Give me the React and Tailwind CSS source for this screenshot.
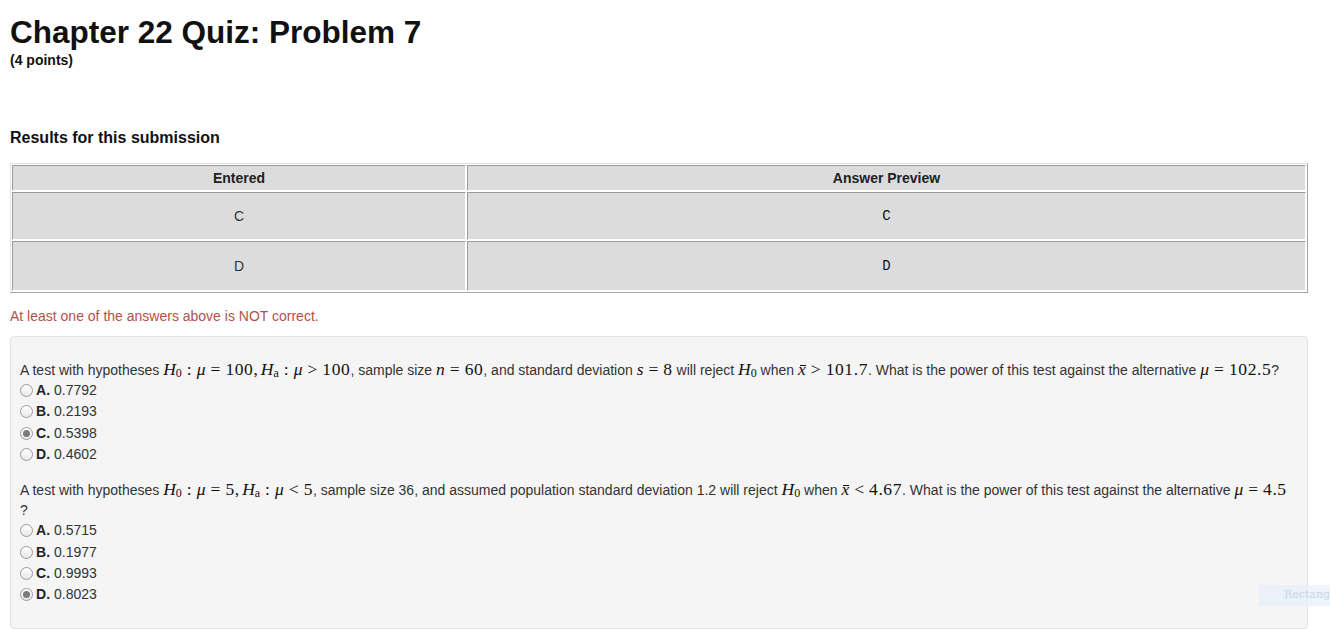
import React from 'react';

const Mi = ({ children }) => <span className="italic">{children}</span>;
const Mn = ({ children }) => <span className="tracking-[0.6px]">{children}</span>;
const Mo = ({ children }) => <span className="mx-[5px]">{children}</span>;
const H = ({ sub }) => (
    <span className="italic">
        H<sub className="not-italic text-[12px] leading-none relative top-[2px] align-baseline">{sub}</sub>
    </span>
);
const XBar = () => (
    <span className="relative inline-block italic leading-none">
        x
        <span className="absolute left-[2px] right-[0px] top-[4px] h-px bg-[#111]" />
    </span>
);

// inline math, roughly the MathJax look
const Math = ({ children }) => (
    <span className="font-['Liberation_Serif','Times_New_Roman',serif] text-[17.5px] leading-none text-[#111] whitespace-nowrap">{children}</span>
);

function Radio({ checked }) {
    return (
        <span className="inline-flex items-center justify-center w-[13px] h-[13px] rounded-full border border-[#9a9a9a] bg-gradient-to-b from-white to-[#e8e8e8] mr-[3px]">
            {checked && <span className="w-[7px] h-[7px] rounded-full bg-[#7b7b7b]" />}
        </span>
    );
}

function Option({ letter, value, checked }) {
    return (
        <div className="leading-[21px] h-[21.33px] flex items-center">
            <Radio checked={checked} />
            <b className="text-[#222]">{letter}.</b>
            <span className="ml-[4px]">{value}</span>
        </div>
    );
}

const cell = "bg-[#dcdcdc] border border-t-[#9c9c9c] border-l-[#9c9c9c] border-b-white border-r-white p-0 text-center align-middle";

export default function App() {
    return (
        <div className="relative w-[1330px] h-[638px] overflow-hidden bg-white font-['Liberation_Sans',Arial,sans-serif] text-[14px] text-[#333]">
            <div className="pl-[10px] w-[1308px]">
                <h1 className="mt-[14px] text-[31.5px] leading-[36px] font-bold text-[#111]">Chapter 22 Quiz: Problem 7</h1>
                <div className="mt-[2px] text-[14px] leading-[16px] font-bold text-[#111]">(4 points)</div>

                <h2 className="mt-[61px] text-[16px] leading-[18px] font-bold text-[#111]">Results for this submission</h2>

                <table className="mt-[16px] w-[1298px] border-separate border-spacing-[1px] border border-t-[#e2e2e2] border-l-[#e2e2e2] border-b-[#a5a5a5] border-r-[#a5a5a5]">
                    <thead>
                        <tr>
                            <th className={`${cell} w-[454px] h-[26px] font-bold text-[#222] leading-[22px]`}>Entered</th>
                            <th className={`${cell} h-[26px] font-bold text-[#222] leading-[22px]`}>Answer Preview</th>
                        </tr>
                    </thead>
                    <tbody>
                        <tr>
                            <td className={`${cell} h-[48px]`}>C</td>
                            <td className={`${cell} h-[48px] font-['Liberation_Mono','Courier_New',monospace] text-[#111]`}>C</td>
                        </tr>
                        <tr>
                            <td className={`${cell} h-[50px]`}>D</td>
                            <td className={`${cell} h-[50px] font-['Liberation_Mono','Courier_New',monospace] text-[#111]`}>D</td>
                        </tr>
                    </tbody>
                </table>

                <div className="mt-[13px] leading-[20px] text-[#b5504d]">At least one of the answers above is NOT correct.</div>

                <div className="mt-[10px] w-[1298px] bg-[#f5f5f5] border border-[#e3e3e3] rounded-[4px] pt-[23px] pb-[22px] px-[9px]">
                    <div className="leading-[20px] h-[20px]">
                        A test with hypotheses{' '}
                        <Math>
                            <H sub="0" /><Mo>:</Mo><Mi>μ</Mi><Mo>=</Mo><Mn>100</Mn>,<span className="ml-[3px]" />
                            <H sub="a" /><Mo>:</Mo><Mi>μ</Mi><Mo>&gt;</Mo><Mn>100</Mn>
                        </Math>
                        , sample size <Math><Mi>n</Mi><Mo>=</Mo><Mn>60</Mn></Math>, and standard deviation{' '}
                        <Math><Mi>s</Mi><Mo>=</Mo><Mn>8</Mn></Math> will reject <Math><H sub="0" /></Math> when{' '}
                        <Math><XBar /><Mo>&gt;</Mo><Mn>101.7</Mn></Math>. What is the power of this test against the alternative{' '}
                        <Math><Mi>μ</Mi><Mo>=</Mo><Mn>102.5</Mn></Math>?
                    </div>
                    <Option letter="A" value="0.7792" />
                    <Option letter="B" value="0.2193" />
                    <Option letter="C" value="0.5398" checked />
                    <Option letter="D" value="0.4602" />

                    <div className="mt-[15px] leading-[20px] h-[40px]">
                        A test with hypotheses{' '}
                        <Math>
                            <H sub="0" /><Mo>:</Mo><Mi>μ</Mi><Mo>=</Mo><Mn>5</Mn>,<span className="ml-[3px]" />
                            <H sub="a" /><Mo>:</Mo><Mi>μ</Mi><Mo>&lt;</Mo><Mn>5</Mn>
                        </Math>
                        , sample size 36, and assumed population standard deviation 1.2 will reject{' '}
                        <Math><H sub="0" /></Math> when <Math><XBar /><Mo>&lt;</Mo><Mn>4.67</Mn></Math>. What is the power of this test against the alternative{' '}
                        <Math><Mi>μ</Mi><Mo>=</Mo><Mn>4.5</Mn></Math>
                        <br />?
                    </div>
                    <Option letter="A" value="0.5715" />
                    <Option letter="B" value="0.1977" />
                    <Option letter="C" value="0.9993" />
                    <Option letter="D" value="0.8023" checked />
                </div>
            </div>

            {/* faint capture-tool overlay in the corner */}
            <div className="absolute left-[1259px] top-[585px] w-[71px] h-[21px] bg-[#e6effb]/70 flex items-center pl-[7px] overflow-hidden">
                <span className="w-[7px] h-[7px] rounded-full bg-[#cfdcee]" />
                <span className="ml-[18px] text-[11px] text-[#c9d5e5] font-['DejaVu_Serif',serif] whitespace-nowrap">Rectang</span>
            </div>
        </div>
    );
}
